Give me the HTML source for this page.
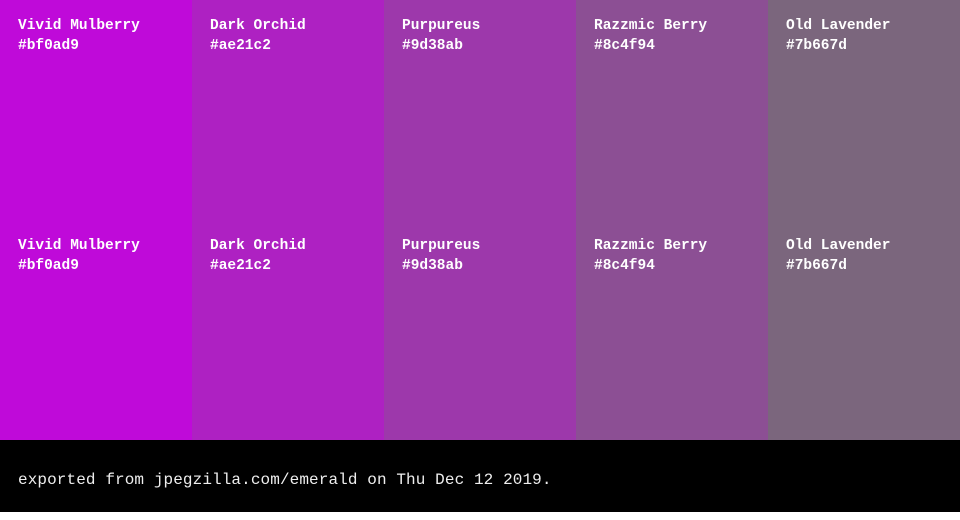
<!DOCTYPE html><html><head><style>
body{margin:0;width:960px;height:512px;overflow:hidden;font-family:"Liberation Mono",monospace;color:#fff}
.row{display:flex;height:220px}
.c{width:192px;box-sizing:border-box;padding:16px 18px;font-size:14.5px;line-height:20px;font-weight:bold}
.f{height:72px;background:#000;padding-left:18px;font-size:16px;letter-spacing:0.1px;line-height:80px;color:#eee}
</style></head><body>
<div class="row"><div class="c" style="background:#bf0ad9">Vivid Mulberry<br>#bf0ad9</div><div class="c" style="background:#ae21c2">Dark Orchid<br>#ae21c2</div><div class="c" style="background:#9d38ab">Purpureus<br>#9d38ab</div><div class="c" style="background:#8c4f94">Razzmic Berry<br>#8c4f94</div><div class="c" style="background:#7b667d">Old Lavender<br>#7b667d</div></div>
<div class="row"><div class="c" style="background:#bf0ad9">Vivid Mulberry<br>#bf0ad9</div><div class="c" style="background:#ae21c2">Dark Orchid<br>#ae21c2</div><div class="c" style="background:#9d38ab">Purpureus<br>#9d38ab</div><div class="c" style="background:#8c4f94">Razzmic Berry<br>#8c4f94</div><div class="c" style="background:#7b667d">Old Lavender<br>#7b667d</div></div>
<div class="f">exported from jpegzilla.com/emerald on Thu Dec 12 2019.</div>
</body></html>
